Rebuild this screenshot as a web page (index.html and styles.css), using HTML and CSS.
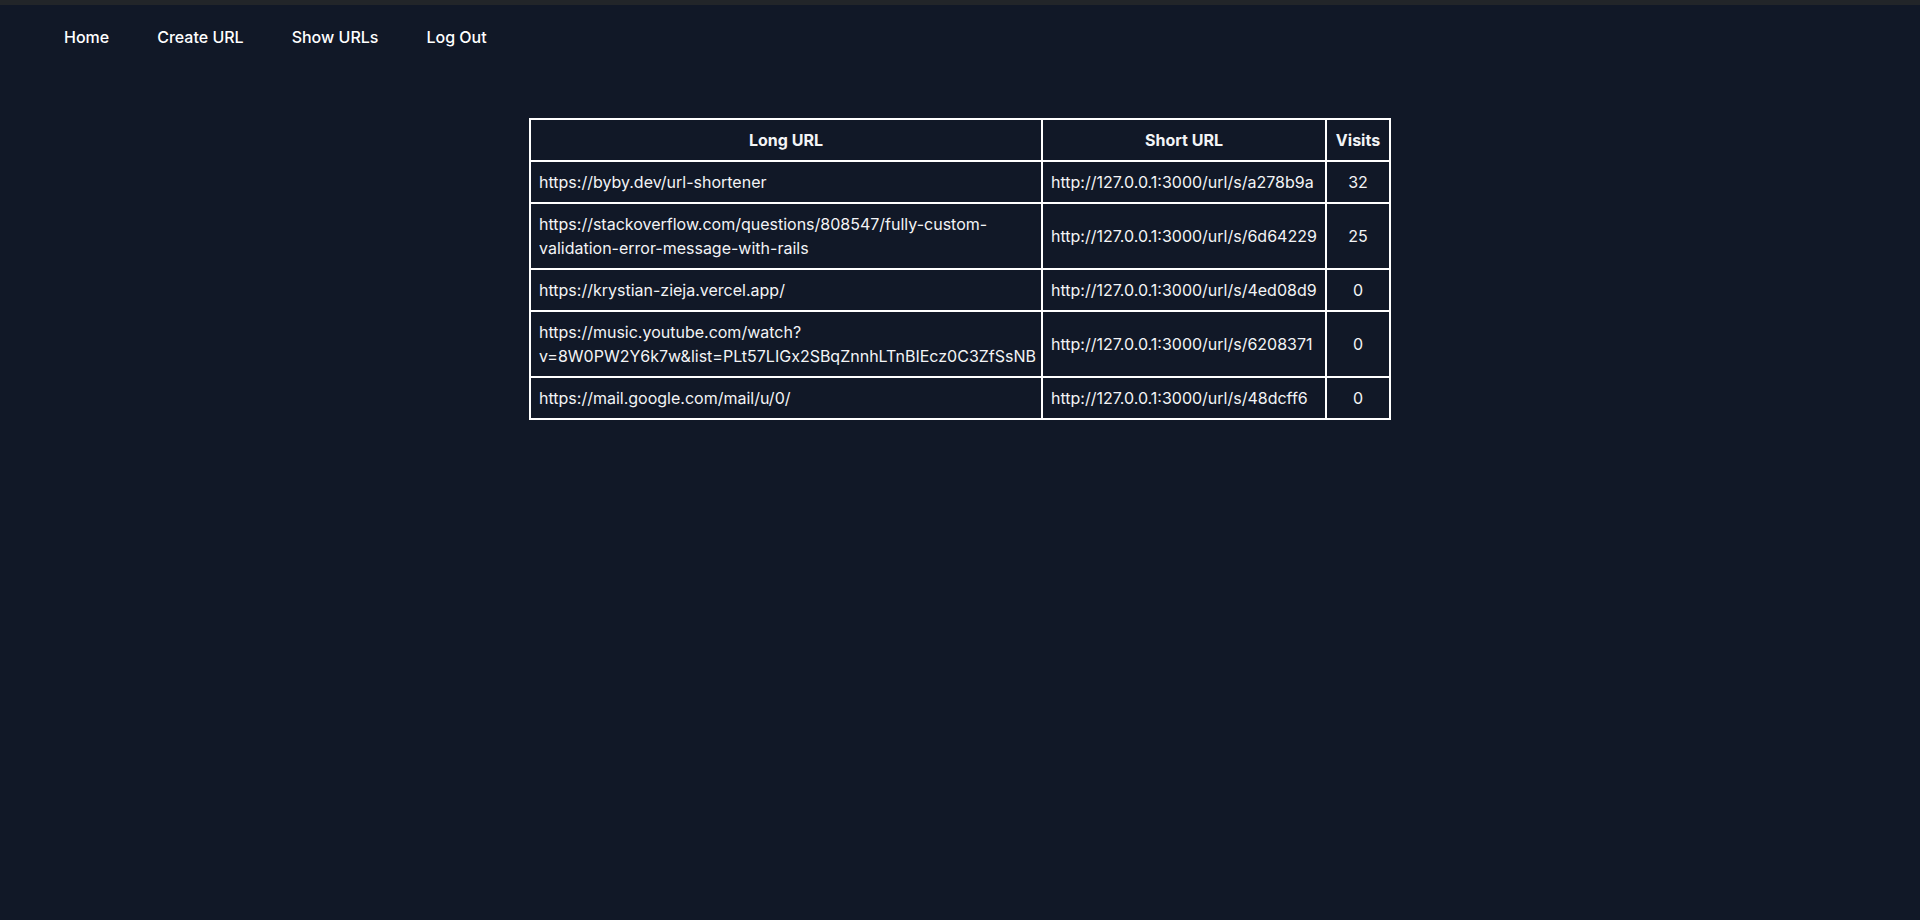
FILE: index.html
```html
<!DOCTYPE html>
<html lang="en">
<head>
<meta charset="utf-8">
<title>Show URLs</title>
<link rel="stylesheet" href="styles.css">
</head>
<body>
<div class="topstrip"></div>
<nav class="nav">
  <a class="nav-link" href="#">Home</a>
  <a class="nav-link" href="#">Create URL</a>
  <a class="nav-link" href="#">Show URLs</a>
  <a class="nav-link" href="#">Log Out</a>
</nav>
<main class="main">
  <table class="urls">
    <colgroup>
      <col class="col-long">
      <col class="col-short">
      <col class="col-visits">
    </colgroup>
    <thead>
      <tr><th>Long URL</th><th>Short URL</th><th>Visits</th></tr>
    </thead>
    <tbody>
      <tr><td>https://byby.dev/url-shortener</td><td>http://127.0.0.1:3000/url/s/a278b9a</td><td class="num">32</td></tr>
      <tr><td>https://stackoverflow.com/questions/808547/fully-custom-validation-error-message-with-rails</td><td>http://127.0.0.1:3000/url/s/6d64229</td><td class="num">25</td></tr>
      <tr><td>https://krystian-zieja.vercel.app/</td><td>http://127.0.0.1:3000/url/s/4ed08d9</td><td class="num">0</td></tr>
      <tr><td>https://music.youtube.com/watch?v=8W0PW2Y6k7w&amp;list=PLt57LIGx2SBqZnnhLTnBIEcz0C3ZfSsNB</td><td>http://127.0.0.1:3000/url/s/6208371</td><td class="num">0</td></tr>
      <tr><td>https://mail.google.com/mail/u/0/</td><td>http://127.0.0.1:3000/url/s/48dcff6</td><td class="num">0</td></tr>
    </tbody>
  </table>
</main>
</body>
</html>
```

FILE: styles.css
```css
html, body {
  margin: 0;
  padding: 0;
  background: #111827;
  color: #f3f4f6;
  font-family: Inter, "Noto Sans", sans-serif;
}
body {
  min-height: 920px;
}
.topstrip {
  height: 5px;
  background: #222529;
}
.nav {
  display: flex;
  gap: 48px;
  padding: 0 0 0 64px;
  height: 64px;
  align-items: center;
}
.nav-link {
  color: #ffffff;
  text-decoration: none;
  font-size: 16px;
  font-weight: 500;
}
.main {
  display: flex;
  justify-content: center;
  padding-top: 49px;
}
.urls {
  border-collapse: collapse;
  table-layout: fixed;
  border: 2px solid #ffffff;
  width: 860px;
  font-size: 16px;
  line-height: 24px;
}
.col-long { width: 512px; }
.col-short { width: 284px; }
.col-visits { width: 64px; }
.urls th, .urls td {
  border: 2px solid #ffffff;
  padding: 8px;
}
.urls th {
  font-weight: 700;
  text-align: center;
}
.urls td {
  text-align: left;
}
.urls td.num {
  text-align: center;
}
```
